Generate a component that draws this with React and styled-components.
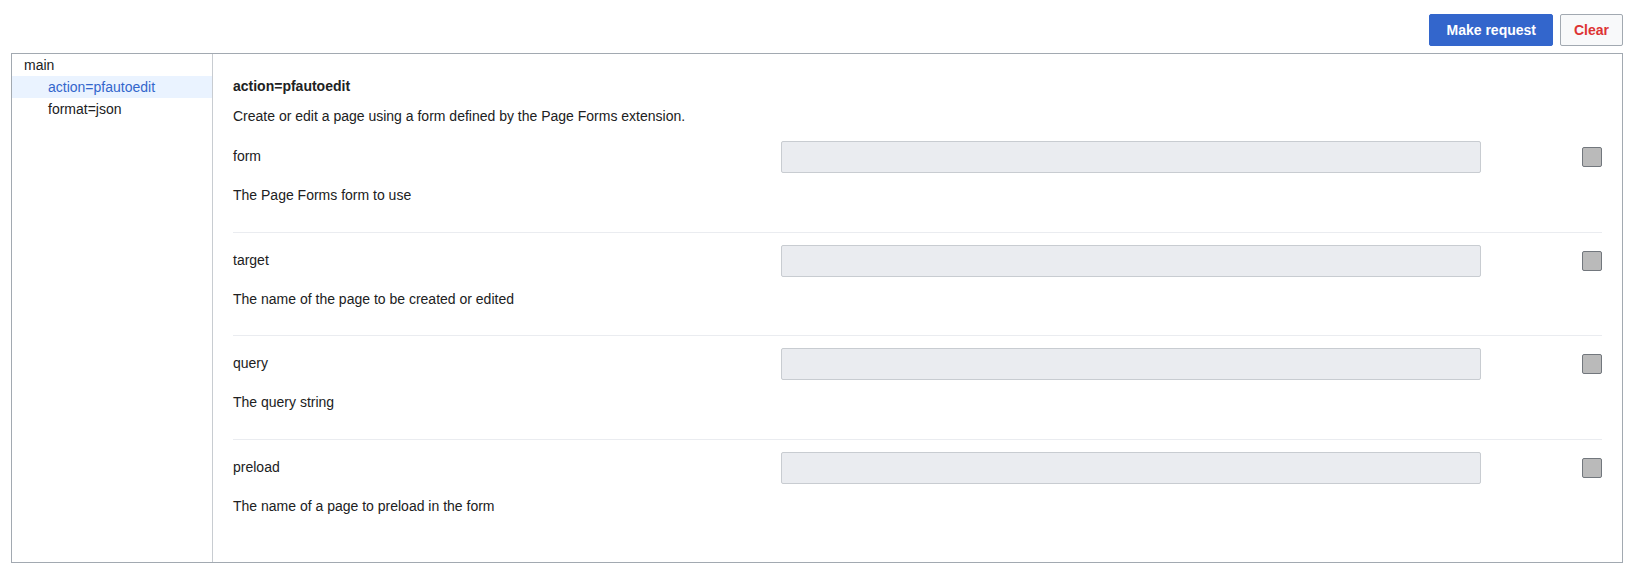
import styled, { createGlobalStyle } from 'styled-components'

const GlobalStyle = createGlobalStyle`
  body {
    margin: 0;
    font-family: "Liberation Sans", Arial, sans-serif;
    font-size: 14px;
    color: #202122;
    background: #fff;
  }
`

const Page = styled.div`
  padding: 14px 9px 0 11px;
`
const Toolbar = styled.div`
  display: flex;
  justify-content: flex-end;
  gap: 7px;
  margin-bottom: 7px;
`
const Button = styled.button`
  height: 32px;
  padding: 0 ${(p) => (p.primary ? 16 : 13)}px;
  border-radius: 2px;
  font-family: inherit;
  font-size: 14px;
  font-weight: bold;
  cursor: pointer;
  border: 1px solid ${(p) => (p.primary ? '#36c' : '#a2a9b1')};
  background: ${(p) => (p.primary ? '#36c' : '#f8f9fa')};
  color: ${(p) => (p.primary ? '#fff' : '#d33')};
`
const Panel = styled.div`
  display: flex;
  border: 1px solid #a2a9b1;
`
const Sidebar = styled.ul`
  list-style: none;
  margin: 0;
  padding: 0;
  width: 200px;
  flex-shrink: 0;
  border-right: 1px solid #c8ccd1;
`
const Item = styled.li`
  height: 22px;
  line-height: 22px;
  padding-left: ${(p) => (p.depth ? 36 : 12)}px;
  background: ${(p) => (p.selected ? '#eaf3ff' : 'transparent')};
  color: ${(p) => (p.selected ? '#36c' : '#202122')};
`
const Content = styled.div`
  flex: 1;
  padding: 21px 20px 20px;
`
const Title = styled.div`
  font-weight: bold;
  line-height: 22px;
`
const Intro = styled.div`
  line-height: 20px;
  margin-top: 9px;
  margin-bottom: 3px;
`
const Block = styled.div`
  padding: 12px 0 26.5px;
  border-bottom: ${(p) => (p.last ? 'none' : '1px solid #eaecf0')};
`
const Row = styled.div`
  display: flex;
  align-items: flex-start;
`
const Label = styled.div`
  width: 40%;
  padding-top: 5px;
  line-height: 20px;
`
const Field = styled.div`
  width: 60%;
  display: flex;
  align-items: center;
  justify-content: space-between;
`
const Input = styled.div`
  width: 700px;
  height: 32px;
  box-sizing: border-box;
  background: #eaecf0;
  border: 1px solid #c8ccd1;
  border-radius: 2px;
`
const Check = styled.div`
  width: 20px;
  height: 20px;
  box-sizing: border-box;
  background: #bababa;
  border: 1px solid #72777d;
  border-radius: 2px;
`
const Help = styled.div`
  margin-top: 12px;
  line-height: 20px;
`

const params = [
  { name: 'form', help: 'The Page Forms form to use' },
  { name: 'target', help: 'The name of the page to be created or edited' },
  { name: 'query', help: 'The query string' },
  { name: 'preload', help: 'The name of a page to preload in the form' },
]

export default function App() {
  return (
    <>
      <GlobalStyle />
      <Page>
        <Toolbar>
          <Button primary>Make request</Button>
          <Button>Clear</Button>
        </Toolbar>
        <Panel>
          <Sidebar>
            <Item>main</Item>
            <Item depth={1} selected>
              action=pfautoedit
            </Item>
            <Item depth={1}>format=json</Item>
          </Sidebar>
          <Content>
            <Title>action=pfautoedit</Title>
            <Intro>Create or edit a page using a form defined by the Page Forms extension.</Intro>
            {params.map((p, i) => (
              <Block key={p.name} last={i === params.length - 1}>
                <Row>
                  <Label>{p.name}</Label>
                  <Field>
                    <Input />
                    <Check />
                  </Field>
                </Row>
                <Help>{p.help}</Help>
              </Block>
            ))}
          </Content>
        </Panel>
      </Page>
    </>
  )
}
